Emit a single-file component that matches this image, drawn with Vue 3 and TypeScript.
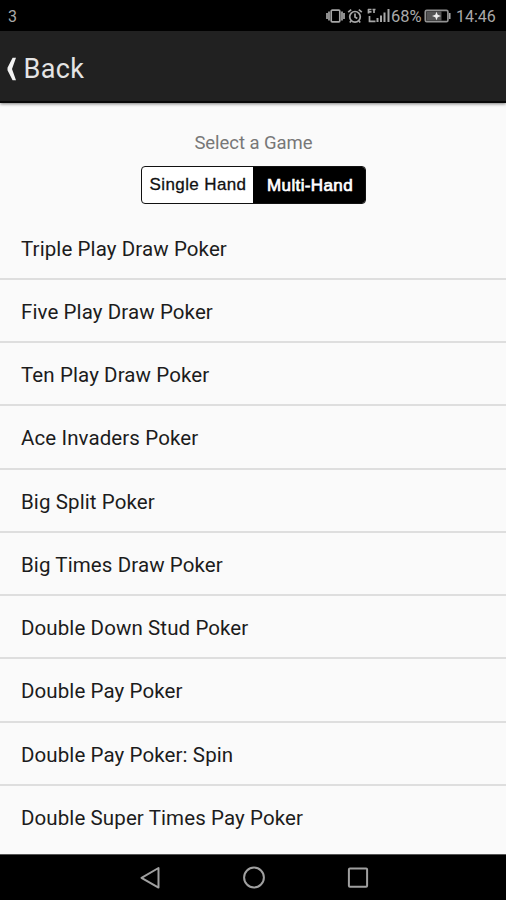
<script setup lang="ts">
import { ref } from 'vue'

type Mode = 'single' | 'multi'

const mode = ref<Mode>('multi')

const games: string[] = [
  'Triple Play Draw Poker',
  'Five Play Draw Poker',
  'Ten Play Draw Poker',
  'Ace Invaders Poker',
  'Big Split Poker',
  'Big Times Draw Poker',
  'Double Down Stud Poker',
  'Double Pay Poker',
  'Double Pay Poker: Spin',
  'Double Super Times Pay Poker',
]
</script>

<template>
  <div class="screen">
    <div class="status">
      <span class="notice">3</span>
      <div class="indicators">
        <svg class="vibrate" width="20" height="16" viewBox="0 0 20 16">
          <rect x="5.2" y="2.2" width="8.6" height="11.6" rx="1" />
          <path d="M3 3.5v9M1 5v6M16 3.5v9M18 5v6" />
        </svg>
        <svg class="alarm" width="16" height="16" viewBox="0 0 16 16">
          <circle cx="8" cy="8.8" r="5.3" />
          <path d="M8 5.5v3.6l2.3 1.4M1.2 4.2l3-2.5M14.8 4.2l-3-2.5M4 13l-1.2 1.5M12 13l1.2 1.5" />
        </svg>
        <svg class="signal" width="24" height="16" viewBox="0 0 24 16">
          <path d="M1 1.5h3.5M1.5 1v4.5M1.5 3.8h3M5.5 1.5h3M7 1.5v3.500M2.500 8v5.300h6" />
          <path class="bars" d="M10.500 14v-4M14 14V7.500M17.500 14V4.500M21.500 14V1" />
        </svg>
        <span class="percent">68%</span>
        <svg class="battery" width="28" height="14" viewBox="0 0 28 14">
          <rect class="charge" x="2.5" y="2.5" width="15" height="9" />
          <rect class="shell" x="1.3" y="1.3" width="22.6" height="11.4" rx="1.5" />
          <path class="tip" d="M25.7 4v6" />
          <path class="plus" d="M12.5 2.8l1.2 3 3.3 1.2-3.3 1.2-1.2 3-1.2-3L8 7l3.3-1.2z" />
        </svg>
        <span class="clock">14:46</span>
      </div>
    </div>

    <header class="bar">
      <button class="back" type="button">
        <svg width="9" height="24" viewBox="0 0 9 24">
          <path d="M5.6 .8H9L5 12l4 11.2H5.6L.5 13.2v-2.4z" />
        </svg>
        <span>Back</span>
      </button>
    </header>

    <main class="content">
      <h1 class="prompt">Select a Game</h1>
      <div class="toggle">
        <button type="button" class="choice single" :class="{ on: mode === 'single' }" @click="mode = 'single'">
          <span>Single Hand</span>
        </button>
        <button type="button" class="choice multi" :class="{ on: mode === 'multi' }" @click="mode = 'multi'">
          <span>Multi-Hand</span>
        </button>
      </div>
      <ul class="games">
        <li v-for="game in games" :key="game">{{ game }}</li>
      </ul>
    </main>

    <nav class="keys">
      <svg width="22" height="24" viewBox="0 0 22 24"><path d="M19.5 2v19.6L2.5 11.8z" /></svg>
      <svg width="24" height="24" viewBox="0 0 24 24"><circle cx="12" cy="11.5" r="9.9" /></svg>
      <svg width="22" height="22" viewBox="0 0 22 22"><rect x="1.9" y="1.5" width="18.2" height="18.2" rx="1" /></svg>
    </nav>
  </div>
</template>

<style>
body {
  margin: 0;
  background: #000;
}
</style>

<style scoped>
.screen {
  box-sizing: border-box;
  width: 506px;
  height: 900px;
  display: flex;
  flex-direction: column;
  overflow: hidden;
  background: #fafafa;
  font-family: Roboto, 'Liberation Sans', sans-serif;
}

button {
  margin: 0;
  padding: 0;
  border: 0;
  background: none;
  font: inherit;
  color: inherit;
}

.status {
  flex: none;
  height: 31px;
  display: flex;
  align-items: center;
  justify-content: space-between;
  padding: 1px 10px 0 8px;
  box-sizing: border-box;
  background: #000;
  color: #a9a9a9;
  font-size: 16px;
}

.notice {
  font-size: 16px;
}

.indicators {
  display: flex;
  align-items: center;
}

.indicators svg {
  fill: none;
  stroke: #a6a6a6;
  stroke-width: 1.7;
}

.alarm {
  margin-left: 1px;
}

.signal {
  margin-left: 4px;
}

.indicators .signal .bars {
  stroke-width: 2;
}

.percent {
  width: 33px;
  font-size: 16.5px;
}

.battery .shell {
  stroke: #929292;
}

.battery .charge {
  fill: #555;
  stroke: none;
}

.battery .plus {
  fill: #eee;
  stroke: none;
}

.percent,
.clock {
  white-space: nowrap;
}

.clock {
  width: 40px;
  margin-left: 4px;
}

.bar {
  flex: none;
  box-sizing: border-box;
  height: 72px;
  display: flex;
  align-items: center;
  padding: 6px 7px 0;
  background: #212121;
  border-bottom: 2px solid #080808;
  box-shadow: 0 1px 3px rgba(0, 0, 0, 0.5);
}

.back {
  display: flex;
  align-items: center;
  gap: 7.5px;
  color: #e4e4e4;
  font-size: 27px;
  line-height: 32px;
  letter-spacing: 0.4px;
}

.back svg {
  fill: #f2f2f2;
}

.content {
  flex: 1;
  min-height: 0;
  display: flex;
  flex-direction: column;
  align-items: center;
}

.prompt {
  margin: 28px 0 0;
  padding-left: 1px;
  font-size: 18.5px;
  font-weight: 400;
  line-height: 24px;
  letter-spacing: -0.05px;
  color: #777;
}

.toggle {
  flex: none;
  box-sizing: border-box;
  display: flex;
  width: 225px;
  height: 38px;
  margin-top: 11px;
  border: 1.5px solid #111;
  border-radius: 4px;
  overflow: hidden;
  background: #fff;
}

.choice {
  font-family: 'Liberation Sans', Arial, sans-serif;
  font-size: 17px;
  letter-spacing: 0.38px;
  color: #111;
  white-space: nowrap;
  -webkit-text-stroke: 0.3px currentColor;
}

.single {
  width: 111px;
  padding-left: 2px;
}

.multi {
  flex: 1;
  padding: 1px 0 0 3px;
}

.on {
  background: #000;
  color: #fff;
  -webkit-text-stroke-width: 0.7px;
}

.games {
  align-self: stretch;
  margin: 12.6px 0 0;
  padding: 0;
  list-style: none;
}

.games li {
  box-sizing: border-box;
  height: 63.28px;
  padding: 0 21px;
  border-bottom: 2px solid #dedede;
  font-size: 20.5px;
  line-height: 64px;
  color: #1c1c1c;
  letter-spacing: 0.1px;
  white-space: nowrap;
}

.games li:last-child {
  border-bottom: 0;
}

.keys {
  flex: none;
  box-sizing: border-box;
  height: 46px;
  display: flex;
  align-items: center;
  justify-content: center;
  gap: 81px;
  padding-left: 1px;
  background: #000;
  border-top: 1px solid #555;
}

.keys svg {
  fill: none;
  stroke: #a0a0a0;
  stroke-width: 2;
  stroke-linejoin: round;
}
</style>
